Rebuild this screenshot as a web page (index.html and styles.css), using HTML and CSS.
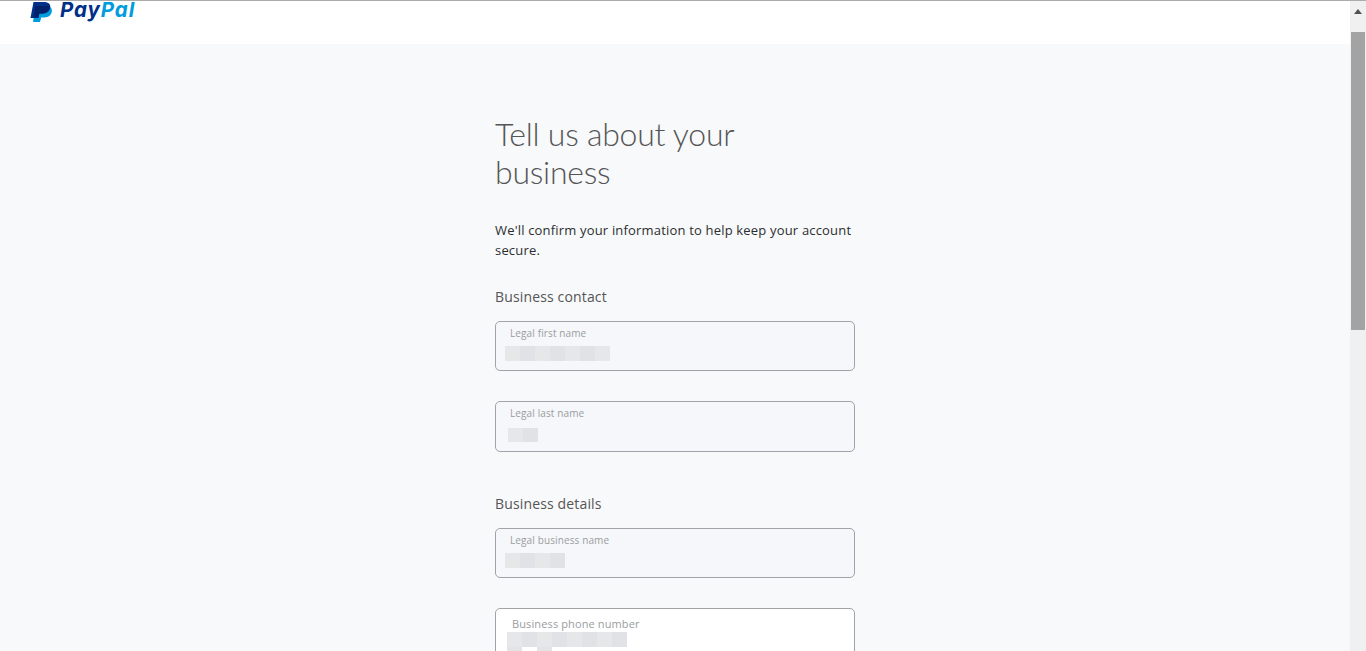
FILE: index.html
```html
<!DOCTYPE html>
<html lang="en">
<head>
    <meta charset="UTF-8">
    <meta name="viewport" content="width=device-width, initial-scale=1.0">
    <title>Tell us about your business - PayPal</title>
    <link rel="stylesheet" href="styles.css">
</head>
<body>

<div class="page">
    <header class="top-bar">
        <a class="logo" href="#">
            <svg class="logo-mark" viewBox="0 0 22 20" width="22" height="20">
                <path fill="#009CDE" d="M5.500 4H16c4 0 6.500 2 5.800 5.700-.7 3.900-3.700 5.700-7.500 5.700h-3.100L10 20H3z"/>
                <path fill="#003087" d="M3.500 0H14c4.500 0 7 2.300 6.200 6-.8 3.800-3.900 5.500-7.700 5.500H9.300L8.300 16H.5z"/>
                <path fill="#012169" d="M5.500 4h14.600c-1 4.800-4 7.500-7.600 7.500H9.300L8.700 15.400H3.600z"/>
            </svg>
            <span class="logo-text"><span class="pay">Pay</span><span class="pal">Pal</span></span>
        </a>
    </header>

    <main class="content">
        <div class="form-column">
            <h1>Tell us about your business</h1>
            <p class="intro">We'll confirm your information to help keep your account secure.</p>

            <h2 class="contact-title">Business contact</h2>
            <div class="field">
                <label>Legal first name</label>
                <div class="blur" style="width: 105px"></div>
            </div>
            <div class="field tall">
                <label>Legal last name</label>
                <div class="blur short" style="width: 30px"></div>
            </div>

            <h2 class="details-title">Business details</h2>
            <div class="field">
                <label>Legal business name</label>
                <div class="blur" style="width: 60px"></div>
            </div>
            <div class="field editable">
                <label>Business phone number</label>
                <div class="blur" style="width: 120px"></div>
                <div class="blur tail"></div>
            </div>
        </div>
    </main>
</div>

<div class="scrollbar">
    <div class="arrow"></div>
    <div class="thumb"></div>
</div>

</body>
</html>
```

FILE: styles.css
```css
/* General Reset */
* {
    margin: 0;
    padding: 0;
    box-sizing: border-box;
}
body {
    font-family: 'Open Sans', sans-serif;
    background-color: #F8F9FB;
    height: 651px;
    overflow: hidden;
    display: flex;
    border-top: 1px solid #ABABAB;
}

.page {
    flex: 1;
    display: flex;
    flex-direction: column;
    min-width: 0;
}

/* Header */
.top-bar {
    height: 43px;
    flex-shrink: 0;
    background-color: #fff;
    padding-left: 30px;
    padding-top: 1px;
}
.logo {
    display: flex;
    align-items: flex-start;
    gap: 8px;
    text-decoration: none;
}
.logo-mark {
    flex-shrink: 0;
}
.logo-text {
    font-family: 'Inter', sans-serif;
    font-size: 20.5px;
    font-weight: 700;
    font-style: italic;
    line-height: 16px;
    letter-spacing: 0.9px;
}
.pay {
    color: #003087;
}
.pal {
    color: #009CDE;
}

/* Form */
.content {
    display: flex;
    justify-content: center;
    padding-top: 71px;
}
.form-column {
    width: 360px;
}
h1 {
    font-family: 'Lato', sans-serif;
    font-size: 32px;
    font-weight: 300;
    line-height: 38px;
    letter-spacing: -0.25px;
    color: #555;
    width: 270px;
}
.intro {
    font-size: 13px;
    line-height: 20px;
    letter-spacing: 0.18px;
    color: #2C2E2F;
    margin-top: 29px;
}
h2 {
    font-size: 14px;
    font-weight: 400;
    line-height: 20px;
    letter-spacing: 0.15px;
    color: #555;
}
.contact-title {
    margin-top: 27px;
    margin-bottom: 14px;
}
.details-title {
    margin-top: 42px;
    margin-bottom: 14px;
}

/* Fields */
.field {
    height: 50px;
    margin-bottom: 30px;
    border: 1px solid #A2A3A6;
    border-radius: 5px;
    padding: 4px 9px;
    background-color: #F5F7FA;
}
.field.tall {
    height: 51px;
}
.field label {
    display: block;
    margin-left: 5px;
    font-size: 10px;
    line-height: 14px;
    letter-spacing: 0.12px;
    color: #9A9DA0;
}
.blur {
    height: 15px;
    margin-top: 6px;
    background: repeating-linear-gradient(90deg, #E6E7E9 0 15px, #E1E2E5 15px 30px);
}
.blur.short {
    height: 14px;
    margin-top: 8px;
    margin-left: 3px;
}
.editable {
    background-color: #fff;
    height: 80px;
    padding-top: 8px;
    padding-left: 11px;
}
.editable label {
    font-size: 11px;
    letter-spacing: 0.12px;
}
.editable .blur {
    margin-top: 1px;
}
.editable .tail {
    width: 45px;
    height: 4px;
    margin-top: 0;
    background: linear-gradient(90deg, #E3E4E6 0 15px, transparent 15px 30px, #E3E4E6 30px 45px);
}

/* Scrollbar */
.scrollbar {
    width: 16px;
    flex-shrink: 0;
    background-color: #F0F0F0;
    display: flex;
    flex-direction: column;
    align-items: center;
    margin-top: -1px;
}
.arrow {
    width: 0;
    height: 0;
    margin-top: 9px;
    border-left: 4px solid transparent;
    border-right: 4px solid transparent;
    border-bottom: 5px solid #505050;
}
.thumb {
    width: 14px;
    height: 298px;
    margin-top: 18px;
    background-color: #A3A3A3;
}
```
